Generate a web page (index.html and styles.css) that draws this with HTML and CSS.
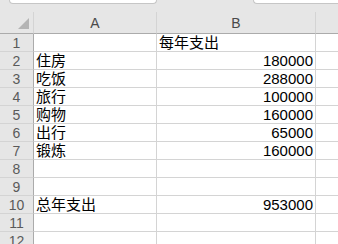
FILE: index.html
```html
<!DOCTYPE html>
<html lang="zh-CN">
<head>
    <meta charset="UTF-8">
    <title>每年支出</title>
    <link rel="stylesheet" href="styles.css">
</head>
<body>
    <!-- Toolbar strip above the sheet -->
    <div class="toolbar">
        <div class="tab tab-left"></div>
        <div class="tab tab-right"></div>
    </div>

    <!-- Sheet grid -->
    <div class="sheet">
        <div class="corner"><span class="tri"></span></div>
        <div class="colhead">A</div>
        <div class="colhead">B</div>
        <div class="colhead last"></div>

        <div class="rowhead">1</div><div class="cell"></div><div class="cell">每年支出</div><div class="cell last"></div>
        <div class="rowhead">2</div><div class="cell">住房</div><div class="cell num">180000</div><div class="cell last"></div>
        <div class="rowhead">3</div><div class="cell">吃饭</div><div class="cell num">288000</div><div class="cell last"></div>
        <div class="rowhead">4</div><div class="cell">旅行</div><div class="cell num">100000</div><div class="cell last"></div>
        <div class="rowhead">5</div><div class="cell">购物</div><div class="cell num">160000</div><div class="cell last"></div>
        <div class="rowhead">6</div><div class="cell">出行</div><div class="cell num">65000</div><div class="cell last"></div>
        <div class="rowhead">7</div><div class="cell">锻炼</div><div class="cell num">160000</div><div class="cell last"></div>
        <div class="rowhead">8</div><div class="cell"></div><div class="cell"></div><div class="cell last"></div>
        <div class="rowhead">9</div><div class="cell"></div><div class="cell"></div><div class="cell last"></div>
        <div class="rowhead">10</div><div class="cell">总年支出</div><div class="cell num">953000</div><div class="cell last"></div>
        <div class="rowhead">11</div><div class="cell"></div><div class="cell"></div><div class="cell last"></div>
        <div class="rowhead">12</div><div class="cell"></div><div class="cell"></div><div class="cell last"></div>
    </div>
</body>
</html>
```

FILE: styles.css
```css
* {
    margin: 0;
    padding: 0;
    box-sizing: border-box;
}
body {
    background: #fff;
    font-family: "Liberation Sans", "Noto Sans CJK SC", sans-serif;
    width: 338px;
    height: 244px;
    overflow: hidden;
}
.toolbar {
    height: 12px;
    background: #e6e6e6;
    display: flex;
    align-items: flex-start;
}
.tab {
    height: 4px;
    background: #fff;
    border: 1px solid #c6c6c6;
    border-top: none;
    border-radius: 0 0 4px 4px;
}
.tab-left {
    margin-left: 9px;
    width: 148px;
}
.tab-right {
    margin-left: 96px;
    flex: 1;
    border-right: none;
    border-radius: 0 0 0 4px;
}
.sheet {
    display: grid;
    grid-template-columns: 34px 123px 159px 1fr;
    grid-template-rows: 22px repeat(12, 18px);
}
.corner {
    background: #e6e6e6;
    border-right: 1px solid #d4d4d4;
    border-bottom: 1px solid #ababab;
    position: relative;
}
.tri {
    position: absolute;
    right: 4px;
    bottom: 4px;
    width: 0;
    height: 0;
    border-left: 11px solid transparent;
    border-bottom: 11px solid #b4b4b4;
}
.colhead {
    background: #e6e6e6;
    border-right: 1px solid #d4d4d4;
    border-bottom: 1px solid #ababab;
    color: #4a4a4a;
    font-size: 14px;
    text-align: center;
    line-height: 22px;
}
.rowhead {
    background: #e6e6e6;
    border-right: 1px solid #ababab;
    border-bottom: 1px solid #d4d4d4;
    color: #5a5a5a;
    font-size: 14px;
    text-align: center;
    line-height: 18px;
}
.cell {
    border-right: 1px solid #d4d4d4;
    border-bottom: 1px solid #d4d4d4;
    font-size: 15px;
    line-height: 18px;
    padding: 0 2px;
    color: #000;
    white-space: nowrap;
    overflow: hidden;
}
.num {
    text-align: right;
}
.last {
    border-right: none;
}
```
